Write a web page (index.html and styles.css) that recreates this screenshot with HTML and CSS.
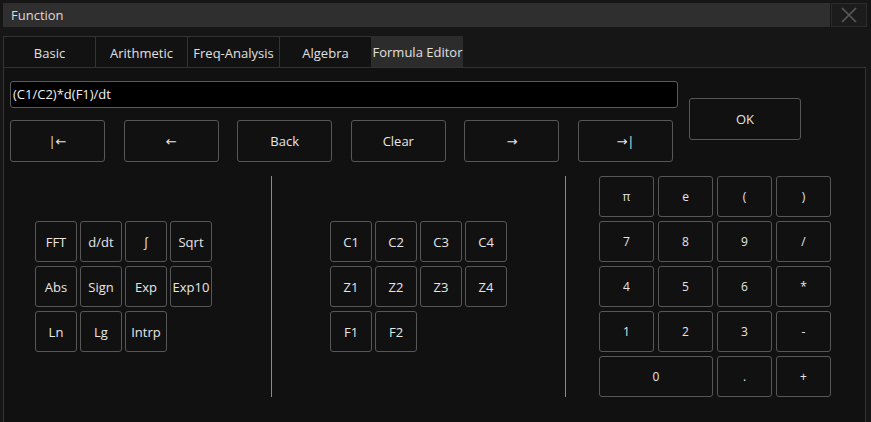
FILE: index.html
```html
<!DOCTYPE html>
<html lang="en">
  <head>
    <meta charset="UTF-8" />
    <meta name="viewport" content="width=device-width, initial-scale=1.0" />
    <title>Function</title>
    <link rel="stylesheet" href="styles.css">
  </head>
  <body>
    <div class="window">
      <div class="titlebar">
        <div class="title">Function</div>
        <button type="button" class="close-btn">
          <svg width="16" height="16" viewBox="0 0 16 16">
            <path d="M1 1 L15 15 M15 1 L1 15" stroke="#5a5a5a" stroke-width="1.6" fill="none" />
          </svg>
        </button>
      </div>

      <div class="tabs">
        <div class="tab">Basic</div>
        <div class="tab">Arithmetic</div>
        <div class="tab">Freq-Analysis</div>
        <div class="tab">Algebra</div>
        <div class="tab active">Formula Editor</div>
      </div>

      <div class="panel">
        <div class="editor">
          <div class="editor-left">
            <div class="formula">(C1/C2)*d(F1)/dt</div>
            <div class="nav-row">
              <button type="button" class="btn nav-btn">|&#8592;</button>
              <button type="button" class="btn nav-btn">&#8592;</button>
              <button type="button" class="btn nav-btn">Back</button>
              <button type="button" class="btn nav-btn">Clear</button>
              <button type="button" class="btn nav-btn">&#8594;</button>
              <button type="button" class="btn nav-btn">&#8594;|</button>
            </div>
          </div>
          <button type="button" class="btn ok-btn">OK</button>
        </div>

        <div class="keys">
          <div class="section funcs">
            <div class="grid4">
              <button type="button" class="btn key">FFT</button>
              <button type="button" class="btn key">d/dt</button>
              <button type="button" class="btn key">&#8747;</button>
              <button type="button" class="btn key">Sqrt</button>
              <button type="button" class="btn key">Abs</button>
              <button type="button" class="btn key">Sign</button>
              <button type="button" class="btn key">Exp</button>
              <button type="button" class="btn key">Exp10</button>
              <button type="button" class="btn key">Ln</button>
              <button type="button" class="btn key">Lg</button>
              <button type="button" class="btn key">Intrp</button>
            </div>
          </div>
          <div class="divider"></div>
          <div class="section sources">
            <div class="grid4">
              <button type="button" class="btn key">C1</button>
              <button type="button" class="btn key">C2</button>
              <button type="button" class="btn key">C3</button>
              <button type="button" class="btn key">C4</button>
              <button type="button" class="btn key">Z1</button>
              <button type="button" class="btn key">Z2</button>
              <button type="button" class="btn key">Z3</button>
              <button type="button" class="btn key">Z4</button>
              <button type="button" class="btn key">F1</button>
              <button type="button" class="btn key">F2</button>
            </div>
          </div>
          <div class="divider"></div>
          <div class="section numbers">
            <div class="numpad">
              <button type="button" class="btn num">&#960;</button>
              <button type="button" class="btn num">e</button>
              <button type="button" class="btn num">(</button>
              <button type="button" class="btn num">)</button>
              <button type="button" class="btn num">7</button>
              <button type="button" class="btn num">8</button>
              <button type="button" class="btn num">9</button>
              <button type="button" class="btn num">/</button>
              <button type="button" class="btn num">4</button>
              <button type="button" class="btn num">5</button>
              <button type="button" class="btn num">6</button>
              <button type="button" class="btn num">*</button>
              <button type="button" class="btn num">1</button>
              <button type="button" class="btn num">2</button>
              <button type="button" class="btn num">3</button>
              <button type="button" class="btn num">-</button>
              <button type="button" class="btn num zero">0</button>
              <button type="button" class="btn num">.</button>
              <button type="button" class="btn num">+</button>
            </div>
          </div>
        </div>
      </div>
    </div>
  </body>
</html>
```

FILE: styles.css
```css
body {
  margin: 0;
  width: 871px;
  height: 422px;
  overflow: hidden;
  background: #161616;
  font-family: "Open Sans", "DejaVu Sans", sans-serif;
  font-size: 13px;
  color: #e6e6e6;
}

.window {
  padding: 3px 4px 0 3px;
}

.titlebar {
  display: flex;
  height: 24px;
  gap: 1px;
}

.title {
  flex: 1;
  background: #2f2f2f;
  padding-left: 8px;
  line-height: 25px;
  color: #dcdcdc;
}

.close-btn {
  width: 36px;
  height: 24px;
  padding: 0;
  background: #1c1c1c;
  border: 1px solid #2c2c2c;
  display: flex;
  align-items: center;
  justify-content: center;
}

.tabs {
  display: flex;
  margin-top: 9px;
  height: 31px;
}

.tab {
  width: 91px;
  background: #121212;
  border-top: 1px solid #333;
  border-left: 1px solid #333;
  text-align: center;
  line-height: 32px;
  color: #e0e0e0;
}

.tab.active {
  background: #2c2c2c;
  border-color: #2c2c2c;
  line-height: 30px;
}

.panel {
  height: 355px;
  background: #111;
  border-top: 1px solid #333;
  border-left: 1px solid #333;
  border-right: 1px solid #333;
  margin-right: 1px;
  box-sizing: border-box;
}

.editor {
  display: flex;
  padding: 13px 0 0 6px;
}

.editor-left {
  width: 668px;
}

.formula {
  height: 27px;
  box-sizing: border-box;
  background: #000;
  border: 1px solid #5a5a5a;
  border-radius: 3px;
  padding-left: 2px;
  line-height: 25px;
  color: #f0f0f0;
}

.nav-row {
  display: flex;
  justify-content: space-between;
  width: 663px;
  margin-top: 12px;
}

.btn {
  background: #111;
  border: 1px solid #575757;
  border-radius: 3px;
  color: #e6e6e6;
  font-family: inherit;
  font-size: 13px;
  padding: 0;
  box-sizing: border-box;
}

.nav-btn {
  width: 95px;
  height: 42px;
}

.ok-btn {
  width: 112px;
  height: 42px;
  margin: 17px 0 0 11px;
}

.keys {
  display: flex;
  align-items: center;
  margin-top: 14px;
  height: 221px;
}

.divider {
  width: 1px;
  height: 221px;
  background: #8a8a8a;
}

.section {
  display: flex;
  align-items: center;
}

.funcs {
  width: 267px;
  padding-left: 31px;
  box-sizing: border-box;
}

.sources {
  width: 293px;
  justify-content: center;
}

.numbers {
  width: 298px;
  justify-content: center;
}

.grid4 {
  display: grid;
  grid-template-columns: repeat(4, 42px);
  grid-auto-rows: 41px;
  column-gap: 3px;
  row-gap: 4px;
}

.numpad {
  display: grid;
  grid-template-columns: repeat(4, 55px);
  grid-auto-rows: 41px;
  column-gap: 4px;
  row-gap: 4px;
}

.num {
  font-size: 12px;
}

.zero {
  grid-column: span 2;
}
```
